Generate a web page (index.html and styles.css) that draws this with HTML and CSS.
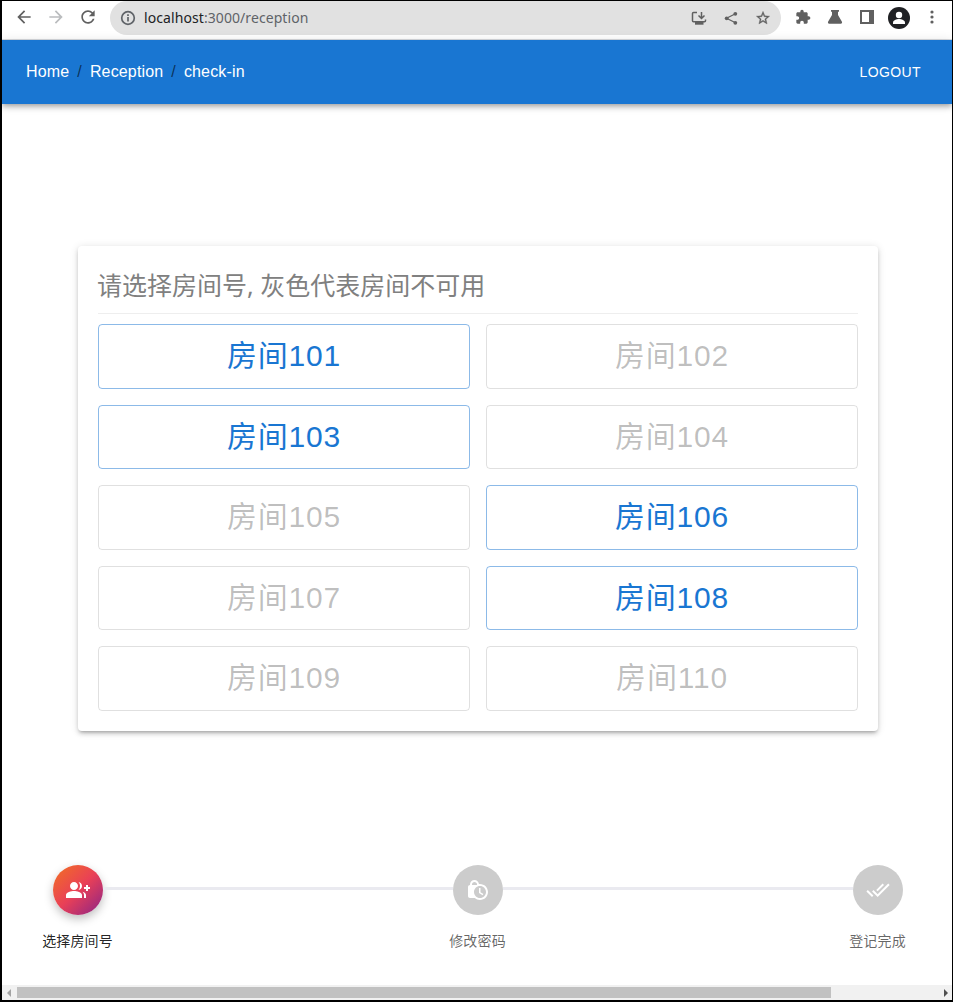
FILE: index.html
```html
<!DOCTYPE html>
<html lang="zh-CN">
<head>
<meta charset="utf-8">
<title>Reception</title>
<link rel="stylesheet" href="styles.css">
</head>
<body>
<div class="window">
  <div class="toolbar">
    <svg class="tool" viewBox="0 0 24 24"><path d="M20 11H7.83l5.59-5.59L12 4l-8 8 8 8 1.41-1.41L7.83 13H20v-2z"/></svg>
    <svg class="tool faded" viewBox="0 0 24 24"><path d="M12 4l-1.41 1.41L16.17 11H4v2h12.17l-5.58 5.59L12 20l8-8z"/></svg>
    <svg class="tool" viewBox="0 0 24 24"><path d="M17.65 6.35C16.2 4.9 14.21 4 12 4c-4.42 0-7.99 3.58-7.99 8s3.57 8 7.99 8c3.73 0 6.84-2.55 7.73-6h-2.08c-.82 2.33-3.04 4-5.65 4-3.31 0-6-2.69-6-6s2.69-6 6-6c1.66 0 3.14.69 4.22 1.78L13 11h7V4l-2.35 2.35z"/></svg>
    <div class="address">
      <svg class="info" viewBox="0 0 16 16"><circle cx="8" cy="8" r="6.3"/><path d="M8 7v4.500M8 4.300v1.700"/></svg>
      <span class="url"><b>localhost</b>:3000/reception</span>
      <svg class="small" viewBox="0 0 16 16"><path class="line" d="M6 2.500H2.500c-.6 0-1 .4-1 1v7.300c0 .6.400 1 1 1h11c.6 0 1-.4 1-1V9.500M10.500 2v6M7.500 5.500l3 3 3-3"/><path d="M4 12h8.500v2.700H4z"/></svg>
      <svg class="small" viewBox="0 0 16 16"><path class="line thin" d="M12.500 3.800L3.500 8.300l9 4.500"/><circle cx="12.300" cy="3.800" r="1.900"/><circle cx="3.700" cy="8.300" r="1.900"/><circle cx="12.300" cy="12.800" r="1.900"/></svg>
      <svg class="small star" viewBox="0 0 24 24"><path d="M22 9.240l-7.190-.620L12 2 9.190 8.630 2 9.240l5.460 4.730L5.820 21 12 17.270 18.180 21l-1.630-7.030L22 9.240zM12 15.400l-3.760 2.270 1-4.280-3.320-2.880 4.380-.380L12 6.100l1.710 4.040 4.380.380-3.320 2.880 1 4.280L12 15.400z"/></svg>
    </div>
    <svg class="ext" viewBox="0 0 24 24"><path d="M20.500 11H19V7c0-1.100-.9-2-2-2h-4V3.500C13 2.120 11.880 1 10.500 1S8 2.120 8 3.500V5H4c-1.100 0-1.990.9-1.990 2v3.800H3.500c1.490 0 2.700 1.210 2.700 2.700s-1.210 2.700-2.700 2.700H2V20c0 1.100.9 2 2 2h3.800v-1.500c0-1.490 1.210-2.700 2.700-2.700 1.490 0 2.700 1.210 2.700 2.700V22H17c1.100 0 2-.9 2-2v-4h1.500c1.380 0 2.500-1.120 2.500-2.500S21.880 11 20.500 11z"/></svg>
    <svg class="ext" viewBox="0 0 16 16"><path d="M4 1h8v1.800h-1V6l3.800 6.500c.7 1.200.1 2.300-1 2.300H2.200c-1.100 0-1.700-1.100-1-2.300L5 6V2.800H4z"/></svg>
    <svg class="ext" viewBox="0 0 16 16"><path fill-rule="evenodd" d="M1 1h14v14H1zM3 3v10h7V3z"/></svg>
    <svg class="avatar" viewBox="0 0 22 22"><circle cx="11" cy="11" r="11" fill="#202124"/><circle cx="11" cy="8" r="3.200" fill="#fff"/><path fill="#fff" d="M5 17v-1.500c0-2 3.500-3.500 6-3.500s6 1.500 6 3.500V17z"/></svg>
    <svg class="dots" viewBox="0 0 16 16"><circle cx="8" cy="3" r="1.600"/><circle cx="8" cy="8" r="1.600"/><circle cx="8" cy="13" r="1.600"/></svg>
  </div>
  <header class="appbar">
    <nav class="crumbs"><span>Home</span><i>/</i><span>Reception</span><i>/</i><span>check-in</span></nav>
    <span class="logout">LOGOUT</span>
  </header>
  <main class="page">
    <section class="card">
      <h1 class="title">请选择房间号, 灰色代表房间不可用</h1>
      <div class="rooms">
        <button class="room">房间101</button>
        <button class="room" disabled>房间102</button>
        <button class="room">房间103</button>
        <button class="room" disabled>房间104</button>
        <button class="room" disabled>房间105</button>
        <button class="room">房间106</button>
        <button class="room" disabled>房间107</button>
        <button class="room">房间108</button>
        <button class="room" disabled>房间109</button>
        <button class="room" disabled>房间110</button>
      </div>
    </section>
    <div class="stepper">
      <div class="step active">
        <div class="track"><span class="rail none"></span><span class="badge"><svg viewBox="0 0 24 24"><path d="M22 9V7h-2v2h-2v2h2v2h2v-2h2V9z"/><path d="M8 12c2.210 0 4-1.790 4-4s-1.790-4-4-4-4 1.790-4 4 1.790 4 4 4zm0 1c-2.670 0-8 1.340-8 4v3h16v-3c0-2.660-5.330-4-8-4zm4.510-8.950C13.430 5.110 14 6.490 14 8s-.57 2.890-1.490 3.950C14.470 11.700 16 10.040 16 8s-1.530-3.700-3.490-3.950zm4.020 9.780C17.420 14.660 18 15.700 18 17v3h2v-3c0-1.450-1.590-2.510-3.470-3.170z"/></svg></span><span class="rail"></span></div>
        <span class="label">选择房间号</span>
      </div>
      <div class="step">
        <div class="track"><span class="rail"></span><span class="badge"><svg viewBox="0 0 24 24"><path d="M14.500 14.200l2.900 1.700-.8 1.300L13 15v-5h1.500v4.200zM22 14c0 4.410-3.590 8-8 8-2.020 0-3.860-.76-5.270-2H4c-1.150 0-2-.85-2-2V9c0-1.120.89-1.960 2-2v-.5C4 4.010 6.010 2 8.500 2c2.340 0 4.240 1.790 4.460 4.080.34-.05.69-.08 1.040-.08 4.410 0 8 3.590 8 8zM6 7h5v-.74C10.880 4.990 9.800 4 8.500 4 7.120 4 6 5.120 6 6.500V7zm14 7c0-3.310-2.690-6-6-6s-6 2.690-6 6 2.690 6 6 6 6-2.690 6-6z"/></svg></span><span class="rail"></span></div>
        <span class="label">修改密码</span>
      </div>
      <div class="step">
        <div class="track"><span class="rail"></span><span class="badge"><svg viewBox="0 0 24 24"><path d="M18 7l-1.410-1.410-6.340 6.340 1.410 1.410L18 7zm4.240-1.410L11.660 16.170 7.480 12l-1.410 1.410L11.660 19l12-12-1.420-1.410zM.41 13.410L6 19l1.410-1.410L1.830 12 .41 13.410z"/></svg></span><span class="rail none"></span></div>
        <span class="label">登记完成</span>
      </div>
    </div>
  </main>
  <div class="scrollbar">
    <svg class="arrow light" viewBox="0 0 15 15"><path d="M9 4v8L5 8z"/></svg>
    <span class="thumb"></span>
    <svg class="arrow" viewBox="0 0 15 15"><path d="M7 4v8l4-4z"/></svg>
  </div>
</div>
</body>
</html>
```

FILE: styles.css
```css
* { box-sizing: border-box; }
body { margin: 0; }
.window {
  width: 953px;
  height: 1002px;
  display: flex;
  flex-direction: column;
  overflow: hidden;
  background: #fff;
  border: solid #000;
  border-width: 1px 1px 2px 2px;
  font-family: "Liberation Sans", "Noto Sans CJK SC", sans-serif;
}
.toolbar {
  flex: none;
  height: 39px;
  display: flex;
  align-items: flex-start;
  padding-left: 12px;
  border-bottom: 1px solid #dadce0;
  fill: #606060;
}
.tool { width: 20px; height: 20px; margin: 6px 12px 0 0; }
.faded { fill: #babcbe; }
.address {
  width: 671px;
  height: 34px;
  display: flex;
  align-items: center;
  padding: 0 10px;
  border-radius: 17px;
  background: #e1e1e1;
}
.info { width: 16px; height: 16px; fill: none; stroke: #5f6368; stroke-width: 1.7; }
.url { flex: 1; margin-left: 8px; font: 14px/20px "Noto Sans", sans-serif; letter-spacing: .08px; color: #5f6368; }
.url b { font-weight: 400; color: #202124; }
.small { width: 16px; height: 16px; margin-left: 16px; }
.star { stroke: #606060; stroke-width: .5; }
.line { fill: none; stroke: #606060; stroke-width: 1.5; }
.thin { stroke-width: 1.2; }
.ext { width: 16px; height: 16px; margin: 8px 0 0 16px; }
.address + .ext { margin-left: 14px; }
.avatar { width: 22px; height: 22px; margin: 6px 0 0 13px; }
.dots { width: 16px; height: 16px; margin: 8px 0 0 14px; }

.appbar {
  position: relative;
  z-index: 1;
  flex: none;
  height: 64px;
  display: flex;
  align-items: center;
  justify-content: space-between;
  padding: 0 31px 0 24px;
  background: #1976d2;
  color: #fff;
  box-shadow: 0 2px 4px -1px rgba(0,0,0,.2), 0 4px 5px 0 rgba(0,0,0,.14), 0 1px 10px 0 rgba(0,0,0,.12);
}
.crumbs { display: flex; font-size: 16px; line-height: 24px; letter-spacing: .00938em; }
.crumbs i { margin: 0 8px; font-style: normal; color: rgba(0,0,0,.6); }
.logout { font-size: 14px; letter-spacing: .4px; }

.page { flex: 1; display: flex; flex-direction: column; min-height: 0; overflow: hidden; padding-top: 142px; }
.card {
  flex: none;
  width: 800px;
  height: 485px;
  margin-left: 76px;
  padding: 20px;
  border-radius: 4px;
  background: #fff;
  box-shadow: 0 3px 3px -2px rgba(0,0,0,.2), 0 3px 4px 0 rgba(0,0,0,.14), 0 1px 8px 0 rgba(0,0,0,.12);
}
.title {
  height: 48px;
  margin: 0 0 10px;
  border-bottom: 1px solid #eee;
  font: 400 25px/38px "Noto Sans", "Noto Sans CJK SC", sans-serif;
  text-indent: -1px;
  color: #808080;
}
.rooms { display: grid; grid-template-columns: 1fr 1fr; gap: 16px; }
.room {
  height: 64.5px;
  padding: 0;
  border: 1px solid rgba(25,118,210,.5);
  border-radius: 4px;
  background: none;
  color: #1976d2;
  font: 400 30px/52.5px "Liberation Sans", "Noto Sans CJK SC", sans-serif;
  letter-spacing: .8px;
}
.room:disabled { border-color: rgba(0,0,0,.12); color: rgba(0,0,0,.26); }

.stepper {
  flex: none;
  display: grid;
  grid-template-columns: repeat(3, 400px);
  margin: 134px 0 0 -124px;
}
.step { display: flex; flex-direction: column; align-items: center; gap: 16px; }
.track { width: 100%; display: flex; align-items: flex-start; }
.rail { flex: 1; height: 3px; margin-top: 22px; background: #eaeaf0; }
.rail.none { background: none; }
.badge {
  width: 50px;
  height: 50px;
  display: grid;
  place-items: center;
  border-radius: 50%;
  background: #ccc;
  fill: #fff;
}
.badge svg { width: 24px; height: 24px; }
.active .badge {
  background: linear-gradient(136deg, #f27121 0%, #e94057 50%, #8a2387 100%);
  box-shadow: 0 4px 10px 0 rgba(0,0,0,.25);
}
.label { padding-right: 1px; font-size: 14px; line-height: 20px; letter-spacing: .00938em; color: rgba(0,0,0,.6); }
.active .label { color: rgba(0,0,0,.87); }

.scrollbar { flex: none; height: 15px; display: flex; align-items: center; background: #f1f1f1; }
.thumb { width: 814px; height: 11px; background: #c1c1c1; }
.arrow { width: 15px; height: 15px; fill: #505050; }
.arrow.light { fill: #a3a3a3; }
.arrow:last-child { margin-left: auto; }
```
